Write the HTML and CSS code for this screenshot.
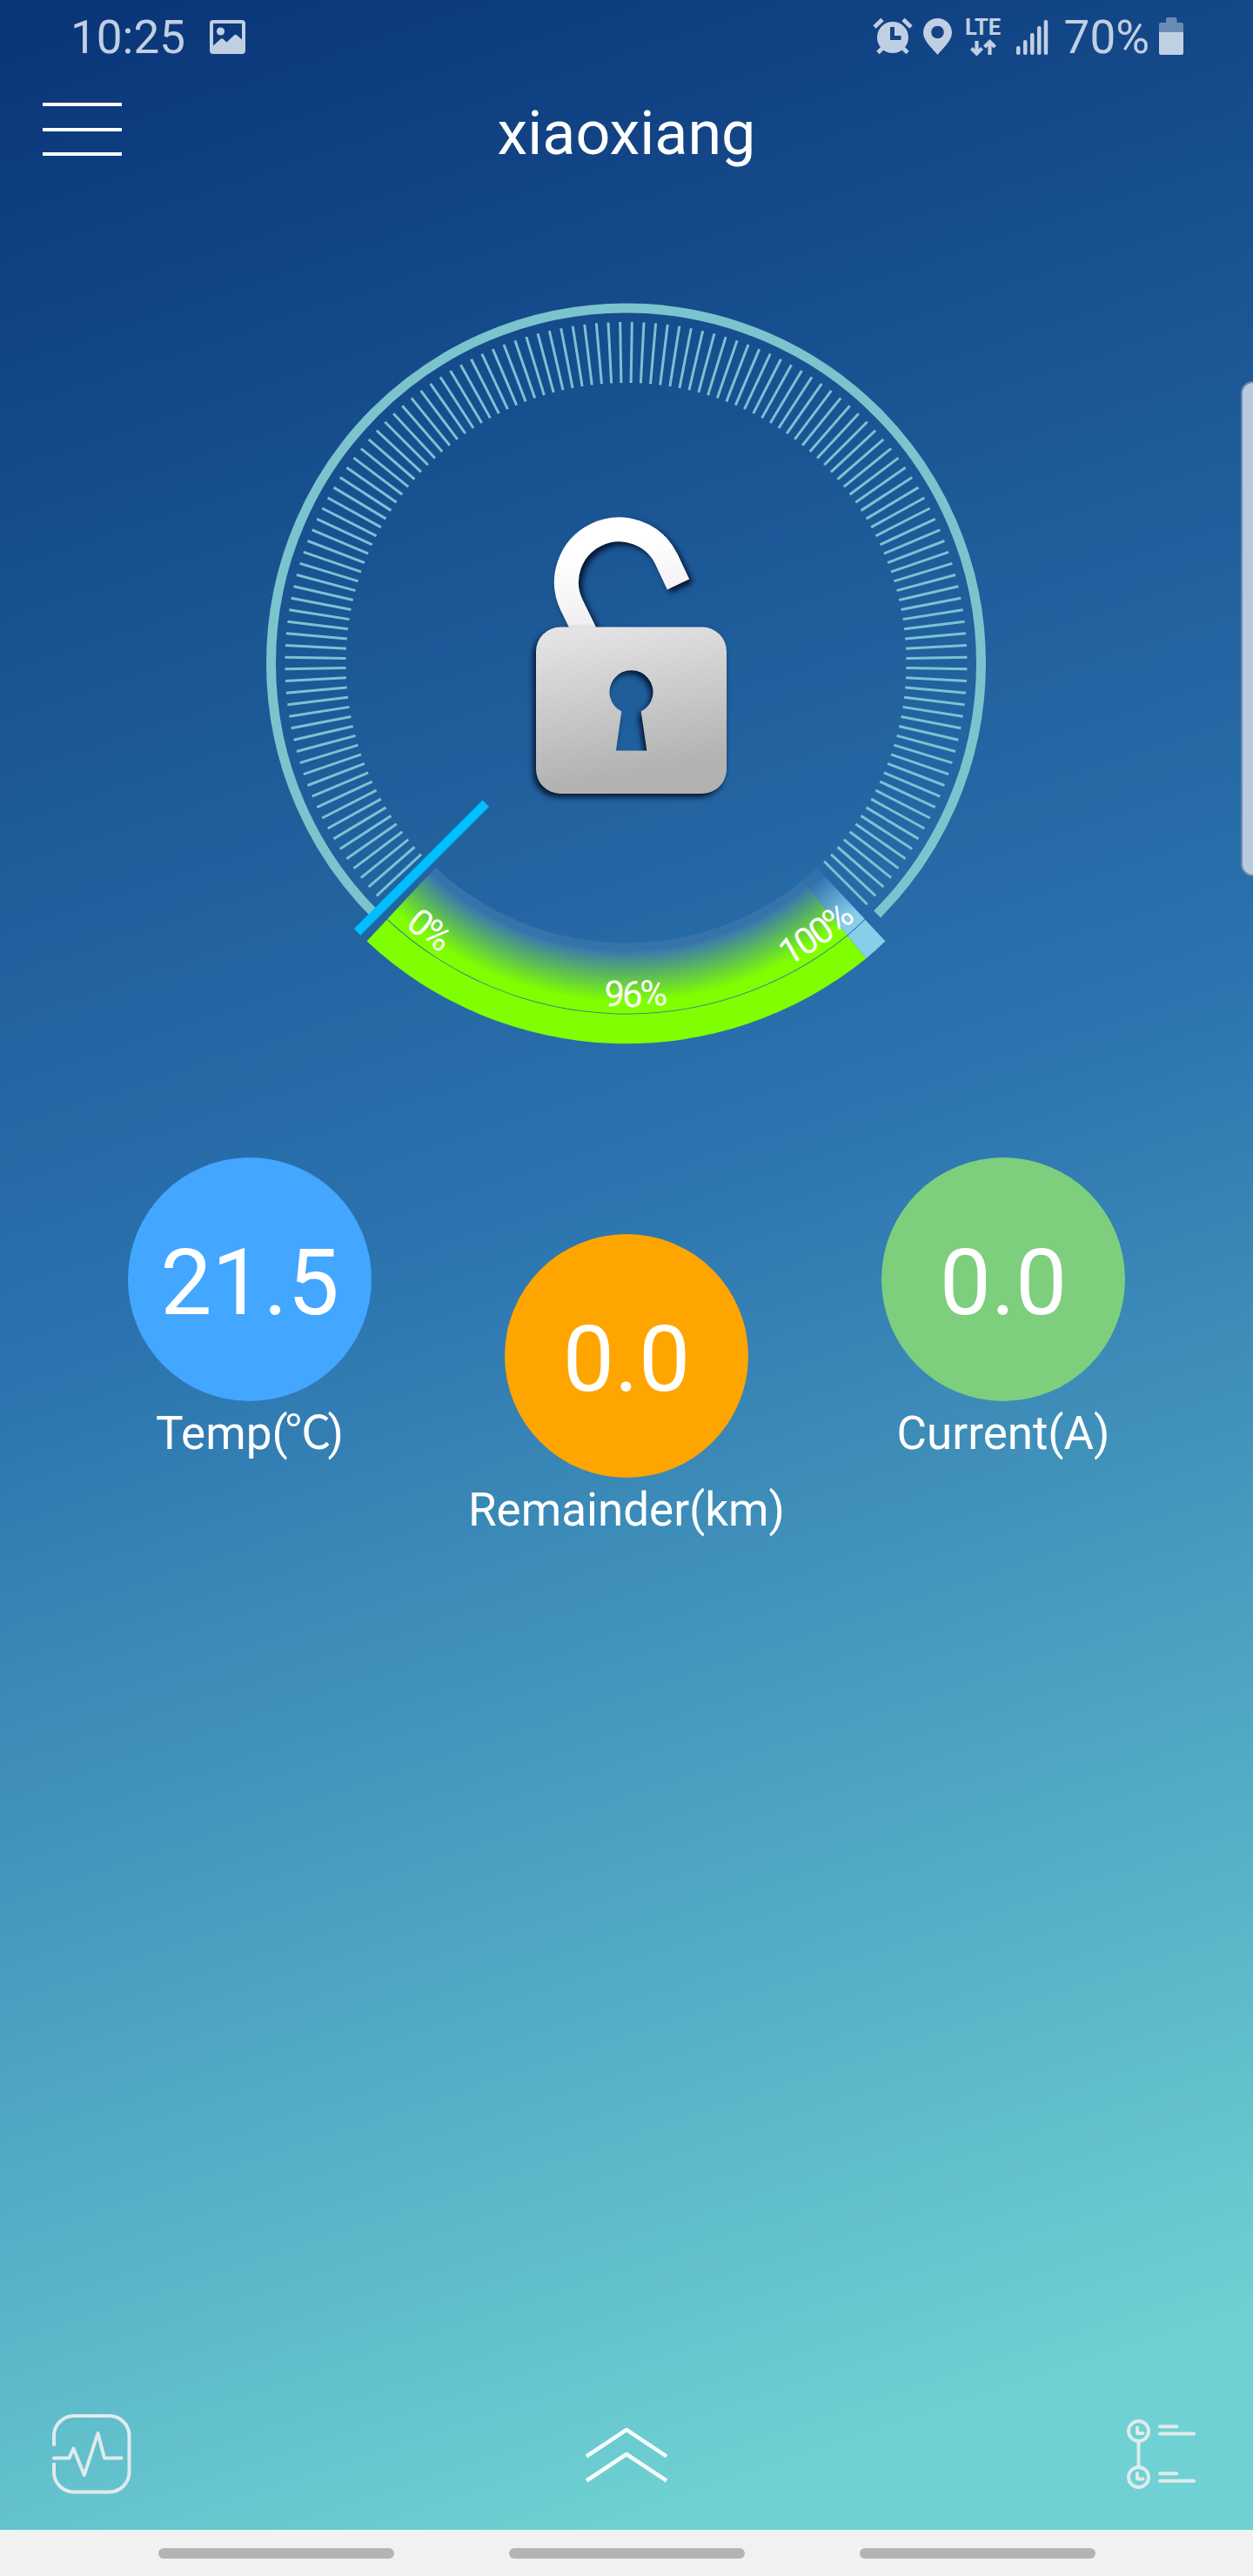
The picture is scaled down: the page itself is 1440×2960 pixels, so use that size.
FILE: index.html
```html
<!DOCTYPE html>
<html lang="en">
<head>
    <meta charset="UTF-8">
    <meta name="viewport" content="width=device-width, initial-scale=1.0">
    <title>xiaoxiang</title>
    <link rel="stylesheet" href="styles.css">
</head>
<body>
    <div class="screen">
        <div class="status-bar">
            <div class="status-left">
                <span class="clock">10:25</span>
                <svg class="icon-picture" viewBox="0 0 41 39" width="41" height="39">
                    <path fill-rule="evenodd" d="M4 0H37a4 4 0 0 1 4 4V35a4 4 0 0 1-4 4H4a4 4 0 0 1-4-4V4a4 4 0 0 1 4-4ZM4 4V29.500L12.300 22q1.700-1.500 3.400 0L19.500 25.500 28 17.500q1.700-1.500 3.400 0L37 22.500V4Z"/>
                    <circle cx="12.500" cy="13" r="4.600"/>
                </svg>
            </div>
            <div class="status-right">
                <svg class="icon-alarm" viewBox="0 0 46 43" width="46" height="43">
                    <path fill-rule="evenodd" d="M23 5a18 18 0 1 1 0 36a18 18 0 0 1 0-36ZM20 11V26H32.500V21H25V11Z"/>
                    <path d="M2 11 11 2.500M44 11 35 2.500M6 40.500 12 34.500M40 40.500 34 34.500" stroke="currentColor" stroke-width="4.800" fill="none"/>
                </svg>
                <svg class="icon-pin" viewBox="0 0 33 42" width="33" height="42">
                    <path fill-rule="evenodd" d="M16.500 0A16.500 16.500 0 0 1 33 16.500C33 26 22 35 16.500 42C11 35 0 26 0 16.500A16.500 16.500 0 0 1 16.500 0ZM16.500 8.700a7.300 7.300 0 1 0 0 14.600a7.300 7.300 0 0 0 0-14.600Z"/>
                </svg>
                <div class="lte">
                    <span>LTE</span>
                    <svg viewBox="0 0 30 20" width="30" height="20">
                        <path d="M7.500 2V16M1.500 10.500 7.500 16.500 13.500 10.500M22.500 18V3M16.500 9 22.500 3 28.500 9" fill="none" stroke="currentColor" stroke-width="4.200"/>
                    </svg>
                </div>
                <svg class="icon-signal" viewBox="0 0 37 40" width="37" height="40">
                    <rect x="0" y="30" width="4.500" height="10" rx="2"/>
                    <rect x="8" y="23" width="4.500" height="17" rx="2"/>
                    <rect x="16" y="15" width="4.500" height="25" rx="2"/>
                    <rect x="24" y="7" width="4.500" height="33" rx="2"/>
                    <rect x="31.700" y="0" width="4.500" height="40" rx="2"/>
                </svg>
                <span class="percent">70%</span>
                <svg class="icon-battery" viewBox="0 0 28 43" width="28" height="43">
                    <path opacity=".5" d="M0 17V8q0-2 2-2H8V2q0-2 2-2H18.500q2 0 2 2V6H26q2 0 2 2V17Z"/>
                    <path d="M0 17H28V41q0 2-2 2H2q-2 0-2-2Z"/>
                </svg>
            </div>
        </div>

        <div class="header">
            <div class="menu">
                <span></span>
                <span></span>
                <span></span>
            </div>
            <h1>xiaoxiang</h1>
        </div>

        <svg class="gauge" viewBox="0 210 1440 1020" width="1440" height="1020">
            <defs>
                <radialGradient id="charge" gradientUnits="userSpaceOnUse" cx="719.500" cy="762" r="403">
                    <stop offset=".797" stop-color="#3573aa"/>
                    <stop offset=".818" stop-color="#3573ab"/>
                    <stop offset=".83" stop-color="#3d80a5"/>
                    <stop offset=".965" stop-color="#7fff00"/>
                </radialGradient>
                <radialGradient id="rest" gradientUnits="userSpaceOnUse" cx="719.500" cy="762" r="403">
                    <stop offset=".797" stop-color="#2f71aa"/>
                    <stop offset=".825" stop-color="#3072ad"/>
                    <stop offset=".965" stop-color="#87ceeb"/>
                </radialGradient>
                <linearGradient id="body" x1=".4" y1="0" x2=".6" y2="1">
                    <stop offset="0" stop-color="#e3e3e3"/>
                    <stop offset=".85" stop-color="#b3b3b3"/>
                    <stop offset="1" stop-color="#b1b1b1"/>
                </linearGradient>
                <linearGradient id="shackle" gradientUnits="userSpaceOnUse" x1="700" y1="630" x2="720" y2="725">
                    <stop offset="0" stop-color="#ffffff"/>
                    <stop offset="1" stop-color="#ececec"/>
                </linearGradient>
                <path id="label-arc" d="M450.100 1050.900A395 395 0 0 0 988.900 1050.900"/>
            </defs>

            <path class="ring" d="M431 1050.500A408 408 0 1 1 1008 1050.500"/>
            <g id="ticks" class="ticks"></g>

            <!-- inner and outer bands of the charge arc, 47deg to 133deg -->
            <path fill="url(#charge)" d="M500.600 996.800A321 321 0 0 0 922.500 1011.500L973.700 1074.600A402.200 402.200 0 0 1 445.200 1056.100Z"/>
            <path fill="url(#rest)" d="M922.500 1011.500A321 321 0 0 0 938.400 996.800L993.800 1056.100A402.200 402.200 0 0 1 973.700 1074.600Z"/>
            <path fill="#7fff00" d="M444.700 1056.700A403 403 0 0 0 974.100 1075.200L995.500 1101.300A437 437 0 0 1 421.500 1081.600Z"/>
            <path fill="#87ceeb" d="M974.100 1075.200A403 403 0 0 0 994.300 1056.700L1017.500 1081.600A437 437 0 0 1 995.500 1101.300Z"/>

            <path class="needle" d="M410.500 1071 558.300 923.200"/>

            <text class="arc-text"><textPath href="#label-arc" startOffset="20">0%</textPath></text>
            <text class="arc-text"><textPath href="#label-arc" startOffset="270.500">96%</textPath></text>
            <text class="arc-text"><textPath href="#label-arc" startOffset="490">100%</textPath></text>

            <path class="shackle" stroke="url(#shackle)" d="M674 730 657.100 695.500A60.500 60.500 0 1 1 765.900 642.500L779.500 671.500"/>
            <path class="lock-body" fill="url(#body)" fill-rule="evenodd" d="M644 720.500H807a28 28 0 0 1 28 28V884a28 28 0 0 1-28 28H644a28 28 0 0 1-28-28V748.500a28 28 0 0 1 28-28ZM714.300 817.500 708 862.500H743.300L736.700 817.500A25 25 0 1 0 714.300 817.500Z"/>
        </svg>

        <div class="metrics">
            <div class="metric">
                <div class="circle blue">21.5</div>
                <p>Temp(<span class="unit">℃</span>)</p>
            </div>
            <div class="metric middle">
                <div class="circle orange">0.0</div>
                <p>Remainder(km)</p>
            </div>
            <div class="metric">
                <div class="circle green">0.0</div>
                <p>Current(A)</p>
            </div>
        </div>

        <div class="toolbar">
            <svg viewBox="0 0 92 92" width="92" height="92" class="line-icon">
                <path d="M2 36.500V25A23 23 0 0 1 25 2H65.500A23 23 0 0 1 88.500 25V66.500A23 23 0 0 1 65.500 89.500H25A23 23 0 0 1 2 66.500V56" stroke-linecap="butt"/>
                <path d="M2 50.500H19.500L24.500 39.500 36.800 70 52.500 22 60 50.500H79.500"/>
            </svg>
            <svg viewBox="0 0 96 64" width="96" height="64" class="chevrons">
                <path d="M2 33.500 48 3 94 33.500M2 61.500 48 31 94 61.500"/>
            </svg>
            <svg viewBox="0 0 80 80" width="80" height="80" class="line-icon">
                <circle cx="13.500" cy="13.500" r="11.500"/>
                <circle cx="13.500" cy="66.500" r="11.500"/>
                <path d="M13.500 26V54M12 9.500V16H18.500M12 62V68.500H18.500M38 8.300H57.500M38 16.500H77M38 62.300H57.500M38 70.800H77"/>
            </svg>
        </div>

        <div class="nav-bar">
            <span></span>
            <span></span>
            <span></span>
        </div>

        <div class="edge-handle"></div>
    </div>
    <script>
        const ticks = document.getElementById("ticks");
        for (let deg = 137; deg <= 405; deg += 2) {
            let line = document.createElementNS("http://www.w3.org/2000/svg", "line");
            line.setAttribute("x1", 322);
            line.setAttribute("x2", 392);
            line.setAttribute("transform", `translate(719.500 762) rotate(${deg})`);
            ticks.appendChild(line);
        }
    </script>
</body>
</html>
```
FILE: styles.css
```css
* {
    box-sizing: border-box;
}

body {
    margin: 0;
    font-family: Roboto, "Noto Sans CJK SC", sans-serif;
    color: white;
}

.screen {
    position: relative;
    display: flex;
    flex-direction: column;
    width: 1440px;
    height: 2960px;
    overflow: hidden;
    background: linear-gradient(161.6deg, #093477 0%, #2b74af 46.5%, #6fd1d3 91.4%);
}

.status-bar {
    display: flex;
    justify-content: space-between;
    height: 88px;
    padding: 0 80px 0 81px;
    color: #c1cfe2;
    font-size: 53px;
    line-height: 62px;
}

.status-bar svg {
    fill: currentColor;
}

.status-left,
.status-right {
    display: flex;
    align-items: flex-start;
}

.clock,
.percent {
    padding-top: 12px;
}

.icon-picture {
    margin: 23px 0 0 28px;
}

.icon-alarm {
    margin: 20px 12px 0 0;
}

.icon-pin {
    margin: 21px 15px 0 0;
}

.lte {
    display: flex;
    flex-direction: column;
    align-items: center;
    width: 42px;
    margin: 17px 17px 0 0;
    font-size: 25.500px;
    font-weight: 700;
    line-height: 28px;
}

.icon-signal {
    margin: 23px 18px 0 0;
}

.icon-battery {
    margin: 20px 0 0 11px;
}

.header {
    display: grid;
    grid-template-columns: 140px 1fr 140px;
    height: 122px;
}

.menu {
    display: flex;
    flex-direction: column;
    justify-content: space-between;
    width: 91px;
    height: 61px;
    margin: 30px 0 0 49px;
}

.menu span {
    height: 4px;
    background: white;
}

h1 {
    margin: 23px 0 0;
    font-size: 70px;
    font-weight: 400;
    line-height: 84px;
    text-align: center;
}

.gauge {
    display: block;
    flex: none;
}

.ring {
    fill: none;
    stroke: #7bc4cd;
    stroke-width: 11;
}

.ticks line {
    stroke: #7ac3d3;
    stroke-width: 3;
}

.needle {
    stroke: #00bfff;
    stroke-width: 10.500;
}

.arc-text {
    fill: white;
    font-size: 42px;
    letter-spacing: -2px;
}

.shackle {
    fill: none;
    stroke-width: 28;
    filter: drop-shadow(4px 4px 3px rgba(0, 10, 30, 0.85));
}

.lock-body {
    filter: drop-shadow(-3px 4px 3px rgba(0, 10, 30, 0.85));
}

.metrics {
    display: flex;
    justify-content: center;
    padding-top: 100px;
}

.metric {
    width: 433px;
    text-align: center;
}

.middle {
    padding-top: 88px;
}

.circle {
    width: 280px;
    height: 280px;
    margin: 0 auto;
    padding-top: 9px;
    border-radius: 50%;
    font-size: 105.500px;
    line-height: 271px;
}

.blue {
    background: #43a6ff;
}

.orange {
    background: #ffa500;
}

.green {
    background: #7dcf7e;
}

.metric p {
    margin: 6px 0 0;
    font-size: 53px;
    line-height: 62px;
}

.unit {
    margin-left: -3px;
    letter-spacing: -4px;
}

.toolbar {
    display: flex;
    align-items: flex-start;
    justify-content: space-between;
    height: 133px;
    margin-top: auto;
    padding: 0 65px 0 60px;
}

.line-icon {
    fill: none;
    stroke: #dfebec;
    stroke-width: 4;
    stroke-linecap: round;
    stroke-linejoin: round;
}

.line-icon:last-child {
    margin-top: 6px;
}

.chevrons {
    margin: 15px 0 0 -7px;
    fill: none;
    stroke: #f6fcfc;
    stroke-width: 4.500;
    stroke-linejoin: round;
}

.nav-bar {
    display: flex;
    justify-content: center;
    gap: 132px;
    height: 53px;
    padding-top: 21px;
    background: #f1f1f1;
}

.nav-bar span {
    width: 271px;
    height: 12px;
    border-radius: 6px;
    background: #b4b4b4;
}

.edge-handle {
    position: absolute;
    top: 438px;
    right: -20px;
    width: 34px;
    height: 569px;
    border: 2px solid #6d88aa;
    border-radius: 14px;
    background: #b9cadf;
}
```
